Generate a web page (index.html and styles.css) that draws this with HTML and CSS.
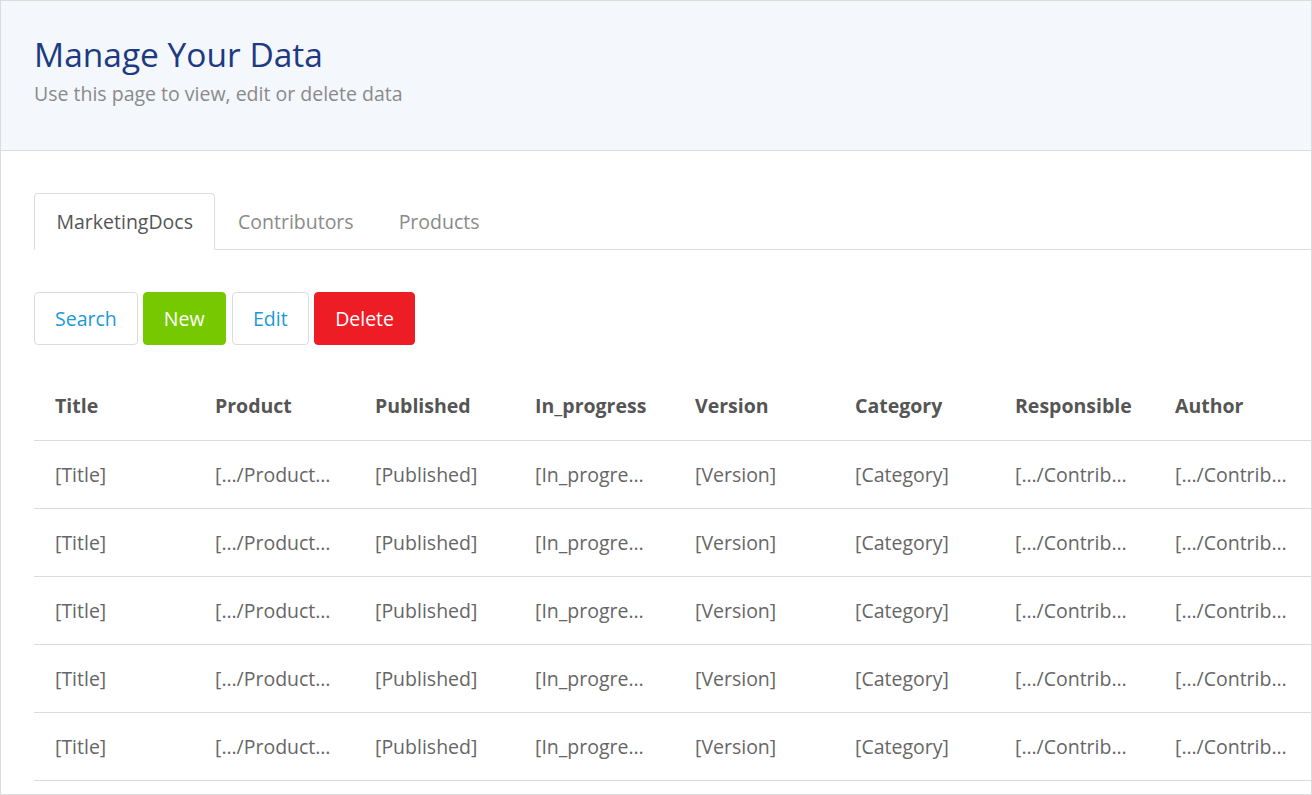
FILE: index.html
```html
<!DOCTYPE html>
<html lang="en">
<head>
<meta charset="utf-8">
<title>Manage Your Data</title>
<link rel="stylesheet" href="styles.css">
</head>
<body>
<div class="frame">
  <header class="page-header">
    <h1 class="page-title">Manage Your Data</h1>
    <p class="page-subtitle">Use this page to view, edit or delete data</p>
  </header>
  <main class="content">
    <nav class="tabs">
      <a class="tab tab-active">MarketingDocs</a>
      <a class="tab">Contributors</a>
      <a class="tab">Products</a>
    </nav>
    <div class="toolbar">
      <button class="btn btn-outline">Search</button>
      <button class="btn btn-green">New</button>
      <button class="btn btn-outline btn-edit">Edit</button>
      <button class="btn btn-red">Delete</button>
    </div>
    <table class="data-table">
      <thead>
        <tr>
          <th>Title</th><th>Product</th><th>Published</th><th>In_progress</th><th>Version</th><th>Category</th><th>Responsible</th><th>Author</th>
        </tr>
      </thead>
      <tbody>
        <tr><td>[Title]</td><td>[…/Products/Name]</td><td>[Published]</td><td>[In_progress]</td><td>[Version]</td><td>[Category]</td><td>[…/Contributors/Name]</td><td>[…/Contributors/Name]</td></tr>
        <tr><td>[Title]</td><td>[…/Products/Name]</td><td>[Published]</td><td>[In_progress]</td><td>[Version]</td><td>[Category]</td><td>[…/Contributors/Name]</td><td>[…/Contributors/Name]</td></tr>
        <tr><td>[Title]</td><td>[…/Products/Name]</td><td>[Published]</td><td>[In_progress]</td><td>[Version]</td><td>[Category]</td><td>[…/Contributors/Name]</td><td>[…/Contributors/Name]</td></tr>
        <tr><td>[Title]</td><td>[…/Products/Name]</td><td>[Published]</td><td>[In_progress]</td><td>[Version]</td><td>[Category]</td><td>[…/Contributors/Name]</td><td>[…/Contributors/Name]</td></tr>
        <tr><td>[Title]</td><td>[…/Products/Name]</td><td>[Published]</td><td>[In_progress]</td><td>[Version]</td><td>[Category]</td><td>[…/Contributors/Name]</td><td>[…/Contributors/Name]</td></tr>
      </tbody>
    </table>
  </main>
</div>
</body>
</html>
```

FILE: styles.css
```css
* { box-sizing: border-box; }
html, body { margin: 0; padding: 0; background: #fff; }
body {
  font-family: "Open Sans", "Liberation Sans", sans-serif;
  color: #555;
  width: 1312px;
  height: 795px;
  overflow: hidden;
}
.frame {
  width: 1312px;
  height: 795px;
  border: 1px solid #dcdcdc;
  overflow: hidden;
}
.page-header {
  height: 150px;
  background: #f4f7fc;
  border-bottom: 1px solid #dcdcdc;
  padding: 31px 33px 0;
}
.page-title {
  margin: 0;
  font-size: 33.5px;
  font-weight: 400;
  line-height: 44px;
  color: #1d3a83;
}
.page-subtitle {
  margin: 5px 0 0;
  font-size: 19.5px;
  line-height: 26px;
  color: #8a8a8a;
}
.content {
  padding: 42px 0 0 33px;
}
.tabs {
  display: flex;
  border-bottom: 1px solid #dcdcdc;
  height: 57px;
}
.tab {
  display: block;
  height: 57px;
  padding: 0 21.5px;
  font-size: 19.5px;
  line-height: 55px;
  color: #8a8a8a;
  border: 1px solid transparent;
  border-radius: 4px 4px 0 0;
}
.tab-active {
  color: #555;
  border-color: #dcdcdc;
  border-bottom-color: #fff;
  background: #fff;
}
.toolbar {
  display: flex;
  gap: 5px;
  margin-top: 42px;
}
.btn {
  font-family: inherit;
  font-size: 19.5px;
  height: 53px;
  padding: 0 20px;
  border-radius: 4px;
  border: 1px solid #dcdcdc;
  background: #fff;
  cursor: pointer;
}
.btn-outline { color: #1a9ad8; }
.btn-edit { margin-left: 1px; padding: 0 20.5px; }
.btn-green { background: #76c900; border-color: #76c900; color: #fff; }
.btn-red { background: #ee1c25; border-color: #ee1c25; color: #fff; }
.data-table {
  margin-top: 27px;
  border-collapse: collapse;
  table-layout: fixed;
  width: 1280px;
}
.data-table th,
.data-table td {
  width: 160px;
  height: 68px;
  padding: 0 22px 0 21px;
  text-align: left;
  font-size: 19.5px;
  white-space: nowrap;
  overflow: hidden;
  text-overflow: ellipsis;
  border-bottom: 1px solid #dcdcdc;
}
.data-table th {
  font-weight: 700;
  color: #555;
}
.data-table td {
  font-weight: 400;
  color: #666;
}
```
